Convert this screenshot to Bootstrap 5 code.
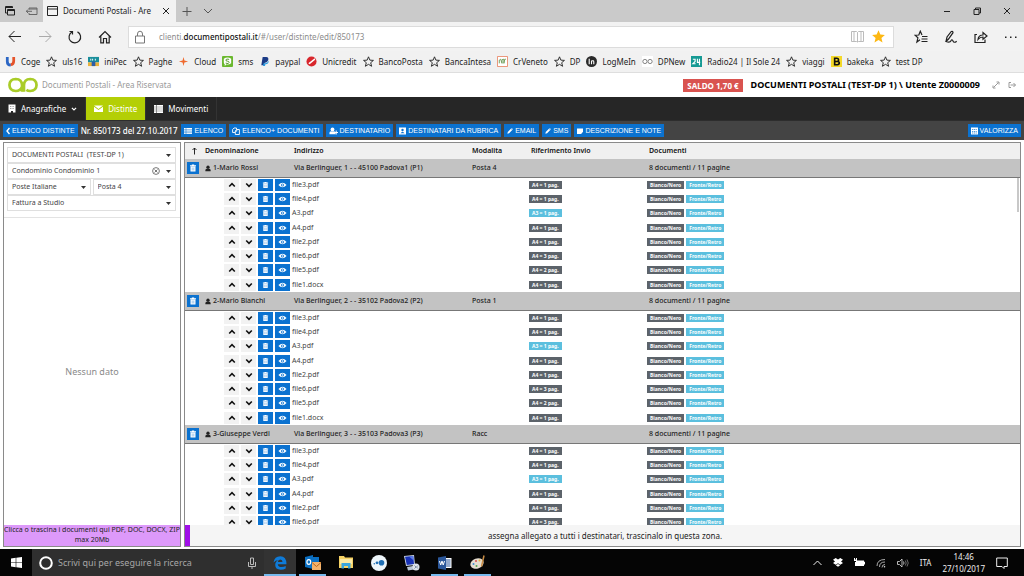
<!DOCTYPE html>
<html lang="it">
<head>
<meta charset="utf-8">
<meta name="viewport" content="width=device-width, initial-scale=1">
<title>Documenti Postali - Area Riservata</title>
<link href="https://cdn.jsdelivr.net/npm/bootstrap@5.3.0/dist/css/bootstrap.min.css" rel="stylesheet">
<style>
  body { font: 8px/12px "Noto Sans", "Open Sans", sans-serif; color: #222; background: #fff; }
  button { font: inherit; color: inherit; border: 0; background: none; padding: 0; }
  svg { display: block; flex: none; }
  .ln { fill: none; stroke: currentColor; }
  a { color: inherit; text-decoration: none; white-space: nowrap; }

  /* browser frame */
  .tabstrip { height: 22px; background: #cacaca; }
  .tab-icons { width: 43px; gap: 10px; }
  .tab-open { background: #f2f2f2; width: 133px; }
  .addressbar { height: 29px; background: #f2f2f2; padding-right: 6px; }
  .navbuttons { width: 128px; }
  .urlbox { height: 22px; background: #fff; border: 1px solid #dcdcdc; color: #8c8c8c; gap: 12px; }
  .urlbox b { color: #111; font-weight: 500; }
  .favbar { height: 22px; background: #f1f1f1; border-bottom: 1px solid #dedede; padding-left: 5px; gap: 6px; color: #222; }
  .favbar a { display: flex; align-items: center; gap: 5px; }

  /* application */
  .apphead { height: 24px; padding: 0 8px; color: #999; }
  .saldo { background: #d9534f; color: #fff; height: 13px; padding: 0 4px; line-height: 13px; }
  .account { font-size: 9px; }
  .mainnav { height: 23px; background: #262626; color: #fff; }
  .mainnav a { display: flex; align-items: center; gap: 5px; padding: 0 8px; border-right: 1px solid #333; }
  .mainnav a.current { background: #b4cf06; }
  .actions { height: 20px; background: #444; padding: 0 3px; gap: 3px; border-top: 1px solid #2d2d2d; }
  .act { background: #0b72d0; color: #fff; height: 13px; padding: 0 3px; font: 7px/13px "Liberation Sans", sans-serif; gap: 2px; display: flex; align-items: center; white-space: nowrap; }
  .distinta { color: #fff; font-weight: 500; padding-right: 1px; }

  .workarea { padding: 2px 3px; gap: 3px; }
  .side { width: 178px; border: 1px solid #8a8a8a; }
  .filters { padding: 4px 4px 6px 3px; border-bottom: 1px solid #e3e3e3; }
  .pick { appearance: none; width: 100%; height: 16px; border: 1px solid #dfdfdf; border-radius: 0; padding: 0 4px; color: #444; font-size: 7px; line-height: 14px;
    background: #fff url("data:image/svg+xml,%3Csvg xmlns='http://www.w3.org/2000/svg' width='5' height='3'%3E%3Cpath d='M0 0h5L2.500 3z' fill='%23333'/%3E%3C/svg%3E") no-repeat right 4px center; }
  .clearpick { position: absolute; right: 16px; top: 4px; color: #555; }
  .dropzone { background: #dd99fa; font-size: 7px; line-height: 10px; height: 21px; color: #222; }
  .empty-note { color: #8a8a8a; font-size: 9px; }

  .list { border: 1px solid #8a8a8a; }
  .rows { flex: 1 1 0; }
  .scrollmark { position: absolute; right: 1px; top: 35px; width: 2px; height: 34px; background: #c8c8c8; }
  .doclist { table-layout: fixed; width: 100%; border-collapse: separate; border-spacing: 0; font-size: 7px; line-height: 12px; color: #444; }
  .doclist td, .doclist th { padding: 0; white-space: nowrap; }
  .doclist th, .doclist .grp td { padding: 0 2px; font-weight: 600; }
  .doclist thead th { height: 16px; background: #f0f0f0; color: #111; }
  .doclist .grp td { height: 19px; background: #c3c3c3; border-bottom: 1px solid #777; color: #222; font-weight: 500; }
  .filerow td { height: 14px; }
  .filerow:nth-child(4n+1) td { height: 15px; }
  .filebuttons { gap: 2px; padding-right: 2px; }
  .tight { gap: 2px; }
  .mini { width: 15px; height: 12px; display: flex; align-items: center; justify-content: center; background: #f2f2f2; color: #111; }
  .mini.blue, .del { background: #0b72d0; color: #fff; }
  .del { width: 12px; height: 12px; display: flex; align-items: center; justify-content: center; }
  .pill { display: block; background: #5c636a; color: #fff; font-size: 5px; font-weight: 700; line-height: 8px; height: 8px; padding: 0 3px; }
  .pill.sky { background: #5bbfde; }
  .assign { height: 21px; background: #f5f5f5; border-left: 5px solid #a010e8; color: #222; }

  /* taskbar */
  .taskbar { height: 27px; background: #050505; color: #eee; }
  .start { width: 32px; }
  .search { width: 232px; background: #2f2f2f; padding: 0 7px; gap: 5px; }
  .search input { background: none; border: 0; outline: 0; color: #a8a8a8; font-size: 9px; padding: 0; min-width: 0; }
  .search input::placeholder { color: #a8a8a8; opacity: 1; }
  .app { width: 33px; height: 27px; display: flex; align-items: center; justify-content: center; }
  .app.running { border-bottom: 2px solid #76b9ed; padding-top: 2px; width: 27px; margin: 0 3px; }
  .app.front { background: #333; width: 32px; margin: 0; }
  .tray { gap: 11px; padding-right: 16px; }
</style>
</head>
<body class="vh-100 d-flex flex-column overflow-hidden">

<svg width="0" height="0" class="position-absolute" aria-hidden="true">
  <symbol id="star" viewBox="0 0 12 12"><path class="ln" d="M6 .9l1.500 3.600 3.900.3-3 2.500 1 3.900L6 9.100l-3.400 2.100 1-3.900-3-2.500 3.900-.3z"/></symbol>
  <symbol id="trash" viewBox="0 0 8 8"><path fill="currentColor" d="M1 1.200h1.800V.5h2.400v.7H7v1H1zM1.500 2.600h5V7.500h-5z"/><path stroke="#0b72d0" stroke-width=".4" d="M3.200 3.500v3M4.800 3.500v3"/></symbol>
  <symbol id="eye" viewBox="0 0 10 8"><path fill="currentColor" d="M.5 4Q5-1 9.500 4 5 9 .5 4z"/><circle cx="5" cy="4" r="1.700" fill="#0b72d0"/><circle cx="5" cy="4" r=".9" fill="#fff"/></symbol>
  <symbol id="up" viewBox="0 0 8 8"><path class="ln" stroke-width="1.600" d="M1.200 5.500L4 2.700l2.800 2.800"/></symbol>
  <symbol id="down" viewBox="0 0 8 8"><path class="ln" stroke-width="1.600" d="M1.200 2.500L4 5.300l2.800-2.800"/></symbol>
  <symbol id="person" viewBox="0 0 8 8"><circle cx="4" cy="2.300" r="2.200" fill="currentColor"/><path fill="currentColor" d="M.5 7.800V6Q.5 4.300 2.300 4.200q1.700 1 3.400 0Q7.500 4.300 7.500 6v1.800z"/></symbol>
  <symbol id="pencil" viewBox="0 0 8 8"><path fill="currentColor" d="M.5 7.500l.5-2.300L5.200 1 7 2.800 2.800 7zM5.700.6L6.300 0 8 1.700l-.6.6z"/></symbol>
</svg>

<header>
  <div class="tabstrip d-flex align-items-stretch">
    <div class="tab-icons d-flex align-items-center ps-1">
      <svg width="12" height="12" viewBox="0 0 12 12"><path class="ln" d="M3 8H1.500V1.500H8.500V3M1.500 2.500h7M3.500 4.500h7v5.500h-7zM3.500 5.500h7"/></svg>
      <svg width="12" height="12" viewBox="0 0 12 12"><path class="ln" color="#666" d="M3 4.500V3h8v6.500H3V8M3 4h8M0 6.300h6M2 4.500L.4 6.300 2 8"/></svg>
    </div>
    <div class="tab-open d-flex align-items-center px-1">
      <svg width="12" height="12" viewBox="0 0 12 12" class="me-1"><path class="ln" d="M.5 1.500h10v9H.5zM.5 4h10"/></svg>
      <span class="text-nowrap flex-grow-1">Documenti Postali - Are</span>
      <button aria-label="Chiudi scheda"><svg width="12" height="12" viewBox="0 0 12 12"><path class="ln" d="M3 3l6 6M9 3L3 9"/></svg></button>
    </div>
    <button class="ms-1" aria-label="Nuova scheda"><svg width="14" height="12" viewBox="0 0 14 12"><path class="ln" color="#555" d="M7 2v9M2.500 6.500h9"/></svg></button>
    <button class="ms-2" aria-label="Elenco schede"><svg width="12" height="12" viewBox="0 0 12 12"><path class="ln" color="#555" d="M2 4l4 4 4-4"/></svg></button>
    <div class="ms-auto d-flex align-items-center gap-3 pe-2 me-1">
      <button class="me-1" aria-label="Riduci"><svg width="10" height="10" viewBox="0 0 10 10"><path class="ln" d="M2 5.500h6"/></svg></button>
      <button class="me-1" aria-label="Ripristina"><svg width="10" height="10" viewBox="0 0 10 10"><path class="ln" d="M2 3.500h5v5H2zM3.500 3.500V2H8.500v5H7"/></svg></button>
      <button aria-label="Chiudi"><svg width="10" height="10" viewBox="0 0 10 10"><path class="ln" d="M2 2l6 6M8 2L2 8"/></svg></button>
    </div>
  </div>

  <div class="addressbar d-flex align-items-center">
    <div class="navbuttons d-flex align-items-center ps-2 gap-3">
      <button aria-label="Indietro"><svg width="14" height="14" viewBox="0 0 14 14"><path class="ln" d="M13 6.500H1M6.500 1L1 6.500 6.500 12"/></svg></button>
      <button aria-label="Avanti"><svg width="14" height="14" viewBox="0 0 14 14"><path class="ln" color="#aaa" d="M1 6.500h12M7.500 1L13 6.500 7.500 12"/></svg></button>
      <button aria-label="Aggiorna"><svg width="14" height="14" viewBox="0 0 14 14"><path class="ln" stroke-width="1.200" d="M9.500 1.900A5.800 5.800 0 1 1 4 2M1.500 1.500H4.500V4.500"/></svg></button>
      <button aria-label="Home"><svg width="14" height="14" viewBox="0 0 14 14"><path class="ln" stroke-width="1.200" d="M1 7.500L7 1.500l6 6M2.800 6v6.800h2.700V8.500h3v4.300h2.700V6"/></svg></button>
    </div>
    <div class="urlbox d-flex align-items-center flex-grow-1 ps-1">
      <svg width="14" height="14" viewBox="0 0 14 14"><path class="ln" color="#777" d="M2.500 6h9v7h-9zM4.500 6V4q0-2.800 2.500-2.800T9.500 4v2"/></svg>
      <a href="#">clienti.<b>documentipostali.it</b>/#/user/distinte/edit/850173</a>
      <div class="ms-auto me-2 d-flex gap-2">
        <button aria-label="Visualizzazione lettura"><svg width="13" height="13" viewBox="0 0 13 13"><path class="ln" color="#bbb" d="M.5 1.500h5l1 1 1-1h5v10h-5l-1 .5-1-.5h-5zM6.500 2.500V12M3 1.500v10M10 1.500v10"/></svg></button>
        <button aria-label="Preferito"><svg width="13" height="13" viewBox="0 0 12 12"><path fill="#fdb813" d="M6 .3l1.700 3.900 4.200.3-3.200 2.800 1 4.200L6 9.300l-3.700 2.200 1-4.200L.1 4.500l4.200-.3z"/></svg></button>
      </div>
    </div>
    <div class="d-flex gap-3 ms-3 ps-1">
      <button aria-label="Hub"><svg width="14" height="14" viewBox="0 0 14 14"><path class="ln" stroke-width="1.200" d="M8 5L6.300 1.200 4.800 5 1 5.200l2.900 2.600-1 4.200L6 9.800M8 6.500h5.500M7.500 9h6M7.500 11.500h6"/></svg></button>
      <button aria-label="Note"><svg width="14" height="14" viewBox="0 0 14 14"><path class="ln" stroke-width="1.200" d="M2 11.500L3 7 7.300 1.500q1.700-.6 1.700 1.200L4.500 9 2 11.500q4 1.500 5-.7t2 .2 3.700.2"/></svg></button>
      <button aria-label="Condividi"><svg width="14" height="14" viewBox="0 0 14 14"><path class="ln" stroke-width="1.200" d="M3 4.500H1v8h10v-3M4 9.500Q4.500 5 9 5V2.500L13 6 9 9.300V7Q6 7 4 9.500z"/></svg></button>
      <button aria-label="Altro"><svg width="14" height="14" viewBox="0 0 14 14"><path fill="#222" d="M1 6.500h1.500V8H1zM6 6.500h1.500V8H6zM11 6.500h1.500V8H11z"/></svg></button>
    </div>
  </div>

  <nav class="favbar d-flex align-items-center" id="favs" aria-label="Preferiti"></nav>
</header>

<div class="apphead d-flex align-items-center">
  <svg width="30" height="18" viewBox="0 0 31 18" class="me-1"><g fill="none" stroke="#a9cc28" stroke-width="2.800"><path d="M14.500 16V9q-.2-6-6.500-6.200-6.300.2-6.500 6.200.2 6 6.500 6.200 5 0 6.500-4.500"/><path d="M16.500 16V9q.2-6 6.500-6.200 6.300.2 6.500 6.200-.2 6-6.500 6.200-2.500 0-4-1.200"/></g></svg>
  <span>Documenti Postali - Area Riservata</span>
  <b class="saldo ms-auto">SALDO 1,70 €</b>
  <b class="account text-black ms-2">DOCUMENTI POSTALI (TEST-DP 1) \ Utente Z0000009</b>
  <button class="ms-2 ps-1" aria-label="Schermo intero"><svg width="8" height="8" viewBox="0 0 8 8"><path class="ln" color="#999" d="M1.500 6.500l5-5M4.500 1h2.500v2.500M1 4.500V7h2.500"/></svg></button>
  <button class="ms-2" aria-label="Esci"><svg width="8" height="8" viewBox="0 0 8 8"><path class="ln" color="#999" d="M3 1.500H1v5h2M2.500 4h5M5.500 2l2 2-2 2"/></svg></button>
</div>

<nav class="mainnav d-flex">
  <a href="#"><svg width="8" height="9" viewBox="0 0 8 9"><path fill="#fff" d="M.5.5h7v8H5V7H3v1.500H.5z"/><path stroke="#888" stroke-width=".8" d="M2 2.500h4M2 4.500h4" stroke-dasharray="1 .6"/></svg>Anagrafiche<svg width="6" height="6" viewBox="0 0 8 8"><use href="#down"/></svg></a>
  <a href="#" class="current"><svg width="9" height="9" viewBox="0 0 9 9"><path fill="#fff" d="M0 1.500h9L4.500 5zM0 2.800L4.500 6 9 2.800V8H0z"/></svg>Distinte</a>
  <a href="#"><svg width="9" height="8" viewBox="0 0 9 8"><path fill="#fff" d="M0 0h2v8H0zM2.500 0H9v8H2.500z"/><path stroke="#777" stroke-width=".5" d="M0 2h9M0 4h9M0 6h9"/></svg>Movimenti</a>
</nav>

<div class="actions d-flex align-items-center">
  <button class="act"><svg width="4" height="8" viewBox="0 0 4 8"><path class="ln" stroke-width="1.400" d="M3.500 1L1 4l2.500 3"/></svg>ELENCO DISTINTE</button>
  <span class="distinta text-nowrap">Nr. 850173 del 27.10.2017</span>
  <button class="act"><svg width="8" height="8" viewBox="0 0 8 8"><path fill="#fff" d="M0 1h8v6H0z"/><path stroke="#0b72d0" stroke-width=".5" d="M0 2.700h8M0 4.200h8M0 5.700h8M2 1v6"/></svg>ELENCO</button>
  <button class="act"><svg width="8" height="8" viewBox="0 0 8 8"><path class="ln" stroke-width=".9" d="M3 5.500H.6V2.500L2 1h2.500v1.500M3.300 4l1.400-1.500h2.700v5H3.300zM3.300 4.200h1.500V2.500"/></svg>ELENCO+ DOCUMENTI</button>
  <button class="act"><svg width="9" height="8" viewBox="0 0 9 8"><use href="#person" width="7" height="8"/><path class="ln" d="M7.200 3.500v4M5.500 5.500H9"/></svg>DESTINATARIO</button>
  <button class="act"><svg width="7" height="8" viewBox="0 0 7 8"><path fill="#fff" d="M0 .5h7v7H0z"/><circle cx="3.500" cy="3" r="1.200" fill="#0b72d0"/><path fill="#0b72d0" d="M1.500 6.300Q3.500 3 5.500 6.300z"/></svg>DESTINATARI DA RUBRICA</button>
  <button class="act"><svg width="6" height="6"><use href="#pencil"/></svg>EMAIL</button>
  <button class="act"><svg width="6" height="6"><use href="#pencil"/></svg>SMS</button>
  <button class="act"><svg width="6" height="6" viewBox="0 0 7 7"><path fill="#fff" d="M0 .5h7v4L4.800 7H0z"/></svg>DESCRIZIONE E NOTE</button>
  <button class="act ms-auto"><svg width="7" height="8" viewBox="0 0 7 8"><path fill="#fff" d="M0 .5h7v7H0z"/><path stroke="#0b72d0" stroke-width=".7" d="M1 2.500h5M1 4.500h5M1 6h5" stroke-dasharray="1.200 .6"/></svg>VALORIZZA</button>
</div>

<main class="workarea d-flex flex-grow-1">
  <aside class="side d-flex flex-column flex-shrink-0">
    <form class="filters">
      <select class="pick d-block" aria-label="Azienda"><option>DOCUMENTI POSTALI&nbsp; (TEST-DP 1)</option></select>
      <div class="position-relative">
        <select class="pick d-block" aria-label="Condominio"><option>Condominio Condominio 1</option></select>
        <button type="button" class="clearpick" aria-label="Cancella"><svg width="8" height="8" viewBox="0 0 8 8"><circle cx="4" cy="4" r="3.400" class="ln" stroke-width=".8"/><path class="ln" stroke-width=".8" d="M2.500 2.500l3 3M5.500 2.500l-3 3"/></svg></button>
      </div>
      <div class="d-flex tight">
        <select class="pick" aria-label="Vettore"><option>Poste Italiane</option></select>
        <select class="pick" aria-label="Modalita"><option>Posta 4</option></select>
      </div>
      <select class="pick d-block" aria-label="Fatturazione"><option>Fattura a Studio</option></select>
    </form>
    <div class="empty-note flex-grow-1 d-flex align-items-center justify-content-center">Nessun dato</div>
    <div class="dropzone text-center">Clicca o trascina i documenti qui PDF, DOC, DOCX, ZIP max 20Mb</div>
  </aside>

  <section class="list d-flex flex-column flex-grow-1 position-relative">
    <div class="rows overflow-hidden">
      <table class="doclist" id="doclist">
        <colgroup><col style="width:18px"><col style="width:89px"><col style="width:178px"><col style="width:59px"><col style="width:118px"><col></colgroup>
        <thead><tr>
          <th><svg width="7" height="8" viewBox="0 0 7 8" class="mx-auto"><path class="ln" stroke-width=".9" d="M3.500 7.500V1M1.500 3l2-2 2 2"/></svg></th>
          <th>Denominazione</th><th>Indirizzo</th><th>Modalita</th><th>Riferimento Invio</th><th>Documenti</th>
        </tr></thead>
      </table>
    </div>
    <div class="scrollmark"></div>
    <div class="assign d-flex align-items-center justify-content-center">assegna allegato a tutti i destinatari, trascinalo in questa zona.</div>
  </section>
</main>

<footer class="taskbar d-flex align-items-stretch flex-shrink-0">
  <button class="start d-flex align-items-center justify-content-center" aria-label="Start"><svg width="11" height="11" viewBox="0 0 11 11"><path fill="#fff" d="M0 1.500l4.700-.7v4.400H0zM5.300.7L11 0v5.200H5.300zM0 5.800h4.700v4.400L0 9.500zM5.300 5.800H11V11l-5.700-.7z"/></svg></button>
  <label class="search d-flex align-items-center">
    <svg width="14" height="14" viewBox="0 0 14 14"><circle cx="7" cy="7" r="5.800" fill="none" stroke="#fff" stroke-width="2"/></svg>
    <input type="text" class="flex-grow-1" aria-label="Cerca" placeholder="Scrivi qui per eseguire la ricerca">
    <svg width="10" height="12" viewBox="0 0 10 12"><path class="ln" color="#bbb" d="M3.500 1h3v6.500h-3zM1.500 5v4.500h7V5M5 9.500V12"/></svg>
  </label>
  <button class="app running front" aria-label="Edge"><svg width="14" height="14" viewBox="0 0 14 14"><path fill="#0f7bd8" d="M.5 6.500Q1.500.3 7.300.3q6.200.2 6.200 7.900H4.800q.2 2.800 3.700 2.800 2.500 0 4.200-1.100v2.700q-2.200 1.200-5 1.200-5.500-.2-5.500-5Q2.300 5.500 5.500 4 2.500 4 .5 6.500zM4.800 6h4.700q0-2.600-2.200-2.600T4.800 6z"/></svg></button>
  <button class="app running" aria-label="Outlook"><svg width="16" height="16" viewBox="0 0 16 16"><path fill="#0a6fc2" d="M0 2l8-2v14l-8-2zM8 2h6v5H8z"/><ellipse cx="3.800" cy="7" rx="1.900" ry="2.400" fill="none" stroke="#fff" stroke-width="1.200"/><path fill="#f4b26a" d="M7 7h9v8H7z"/><path fill="none" stroke="#b9691f" d="M7 7.500l4.500 4 4.500-4"/></svg></button>
  <button class="app" aria-label="Esplora file"><svg width="14" height="13" viewBox="0 0 14 13"><path fill="#f6d264" d="M0 0h5l1 1.500h8V12H0z"/><path fill="#fbe9a4" d="M1 3h12v5H1z"/><path fill="#3aa6dd" d="M2.500 7h9v5.500h-2.500V10H5v2.500H2.500z"/></svg></button>
  <button class="app" aria-label="Assistenza"><svg width="16" height="16" viewBox="0 0 16 16"><circle cx="8" cy="8" r="8" fill="#eef6fb"/><circle cx="10.500" cy="7.800" r="2.800" fill="#1f6fb5"/><circle cx="6" cy="7.800" r="1.400" fill="#1f6fb5"/><circle cx="3.300" cy="8.800" r=".8" fill="#1f6fb5"/></svg></button>
  <button class="app" aria-label="Desktop remoto"><svg width="16" height="16" viewBox="0 0 16 16"><path fill="#cbd6e6" d="M0 1l10-1 1 10-9 1z"/><path fill="#1731b5" d="M1 1.800l8.200-.9.8 8.100-7.200 1z"/><path fill="#5b7be6" d="M5 1.400l4.200-.5.5 4.600z"/><path fill="#b9c6d6" d="M3 12l6-1 1 3.500-6 1z"/><circle cx="12" cy="12" r="3.500" fill="#dfe3ea"/><path class="ln" color="#7c8ea3" d="M10.500 10.500l1.500 1.500-1.500 1.500M13.800 10.500L12.500 12l1.300 1.500"/></svg></button>
  <button class="app running" aria-label="Word"><svg width="14" height="14" viewBox="0 0 14 14"><path fill="#fff" d="M7 2h6.500v10H7z"/><path stroke="#2b579a" d="M8 4h4.500M8 6h4.500M8 8h4.500M8 10h4.500"/><path fill="#2b579a" d="M0 1.500L8 0v14l-8-1.500z"/><path fill="none" stroke="#fff" d="M1.500 5l1.200 4L4 5l1.200 4 1.300-4"/></svg></button>
  <button class="app running" aria-label="Paint"><svg width="16" height="15" viewBox="0 0 16 15"><ellipse cx="7" cy="8.500" rx="6.800" ry="5" fill="#e6ddd0" transform="rotate(-20 7 8.500)"/><circle cx="3.500" cy="9" r="1" fill="#3f8fd0"/><circle cx="6" cy="6" r="1" fill="#d95050"/><circle cx="9.500" cy="5.500" r="1" fill="#e6b83c"/><circle cx="6.500" cy="11" r="1" fill="#57a850"/><path stroke="#c98d45" stroke-width="1.500" d="M14 .5l-2.500 11"/></svg></button>
  <div class="tray ms-auto d-flex align-items-center">
    <svg width="9" height="8" viewBox="0 0 9 8"><path class="ln" d="M.5 6l4-4 4 4"/></svg>
    <svg width="10" height="9" viewBox="0 0 10 9"><path fill="#fff" d="M2.700 0L5 1.600 7.300 0 10 1.800 8 3.500l2 1.600-2.700 1.700L5 5.200 2.700 6.800 0 5.100l2-1.600L0 1.800zM2.800 7.300L5 5.900l2.200 1.400L5 8.700z"/></svg>
    <svg width="11" height="9" viewBox="0 0 11 9"><path fill="#fff" d="M2 2.500h8v1.200h1V6.500h-1V8H1V4h1zM0 0h1v1.500h1V0h1v3H0z"/></svg>
    <svg width="10" height="10" viewBox="0 0 10 10"><path class="ln" color="#bbb" stroke-width=".9" d="M1 8Q1 1.500 9 1.500M3.500 9Q3.500 4 9 4M6 9.500Q6 6.500 9 6.500"/><circle cx="8.500" cy="8.800" r=".8" fill="#ddd"/></svg>
    <svg width="12" height="10" viewBox="0 0 12 10"><path class="ln" color="#ccc" stroke-width=".9" d="M.5 3.500h2L5 1v8L2.500 6.500h-2zM6.500 3.500q1 1.500 0 3"/><path class="ln" color="#777" stroke-width=".9" d="M8.300 2.500q1.800 2.500 0 5M10 1.500q2.500 3.500 0 7"/></svg>
    <span>ITA</span>
    <time class="text-center">14:46<br>27/10/2017</time>
    <svg width="12" height="12" viewBox="0 0 12 12"><path class="ln" d="M.7 1h10.600v8.500H8v2L6 9.500H.7z"/></svg>
  </div>
</footer>

<script src="https://cdn.jsdelivr.net/npm/bootstrap@5.3.0/dist/js/bootstrap.bundle.min.js"></script>
<script>
  const star = '<use href="#star"/>';
  const favs = [
    ['Coge', '<path fill="none" stroke="#e5542b" stroke-width="3" d="M6 9.500q3.500 0 3.500-4V1"/><path fill="none" stroke="#2c66c4" stroke-width="3" d="M2.500 1v5q0 4 3.700 4"/>'],
    ['uls16', star],
    ['iniPec', '<path fill="#1a8f9c" d="M0 1h12v6H0z"/><path fill="#e9b23a" d="M0 7h12v4H0z"/><path fill="#2d5fa8" d="M4 6h4v5H4z"/><path stroke="#fff" d="M3 3v2M5 3v2M8 3v2"/>'],
    ['Paghe', star],
    ['Cloud', '<path fill="#ef6a2e" d="M6 1l1 4 4 1-4 1-1 4-1-4-4-1 4-1z"/>'],
    ['sms', '<rect width="12" height="12" rx="1" fill="#6ab82e"/><path fill="#fff" d="M2 3q4-3 8 0v5q-3 2-5 1l-2 2V9Q2 8 2 7z"/><path fill="none" stroke="#4b931b" d="M7.800 3.700Q4.300 2.600 4.300 4.300T6 5.700t1.700 1.500-3.700.6"/>'],
    ['paypal', '<path fill="#1b3b86" d="M4 1h4q3 .5 2 3.500T6 7.500L5.300 10H2.500z"/><path fill="#2a9ade" d="M5 8h2q3-.5 3.500-3 .5 4-3.500 4L6.500 11H4.300z"/>'],
    ['Unicredit', '<circle cx="6" cy="6" r="5.500" fill="#d8262c"/><path fill="#fff" d="M2.500 8L9.500 2.500 10 4 4 9z"/>'],
    ['BancoPosta', star], ['BancaIntesa', star],
    ['CrVeneto', '<path fill="#fff" stroke="#e8896a" d="M.5.5h11v11H.5z"/><path fill="none" stroke="#6a9a55" d="M2.500 8V4.500l1.500-1L5.500 8V4l2-.5V8l1-4.500h1.200"/>'],
    ['DP', star],
    ['LogMeIn', '<circle cx="6" cy="6" r="6" fill="#2a2a2a"/><path fill="none" stroke="#fff" stroke-width="1.200" d="M3.500 3v6M6 9V5.500q2.500-1 2.500 1V9"/>'],
    ['DPNew', '<path fill="#fff" d="M0 0h12v12H0z"/><g fill="none" stroke="#777"><circle cx="3.200" cy="6" r="2.300"/><circle cx="8.800" cy="6" r="2.300"/></g>'],
    ['Radio24 | Il Sole 24', '<path fill="#169a94" d="M0 0h12v12H0z"/><path fill="none" stroke="#fff" stroke-width="1.200" d="M2 3.500h2.500V6L2 8.500h3M7 3v4h3M9.200 3v7"/>'],
    ['viaggi', star],
    ['bakeka', '<path fill="#f4d929" d="M0 0h12v12H0z"/><path fill="none" stroke="#111" stroke-width="1.800" d="M4 2.500v7h3q2 0 2-1.800T7 6H4h2.500q1.800 0 1.800-1.700T6.500 2.500z"/>'],
    ['test DP', star]
  ];
  document.getElementById('favs').innerHTML = favs.map(([name, art]) =>
    `<a href="#"><svg width="11" height="11" viewBox="0 0 12 12">${art}</svg>${name}</a>`).join('');

  const files = [['file3.pdf', 'A4', 1], ['file4.pdf', 'A4', 1], ['A3.pdf', 'A3', 1], ['A4.pdf', 'A4', 1],
    ['file2.pdf', 'A4', 1], ['file6.pdf', 'A4', 3], ['file5.pdf', 'A4', 2], ['file1.docx', 'A4', 1]];
  const recipients = [
    ['1-Mario Rossi', 'Via Berlinguer, 1 - - 45100 Padova1 (P1)', 'Posta 4', 8],
    ['2-Mario Bianchi', 'Via Berlinguer, 2 - - 35102 Padova2 (P2)', 'Posta 1', 8],
    ['3-Giuseppe Verdi', 'Via Berlinguer, 3 - - 35103 Padova3 (P3)', 'Racc', 6]
  ];
  const icon = (id, w = 8, h = 8) => `<svg width="${w}" height="${h}"><use href="#${id}"/></svg>`;
  const fileRow = ([name, size, pages]) => `<tr class="filerow">
    <td colspan="2"><div class="filebuttons d-flex justify-content-end">
      <button class="mini" aria-label="Su">${icon('up')}</button><button class="mini" aria-label="Giu">${icon('down')}</button>
      <button class="mini blue" aria-label="Elimina">${icon('trash', 7)}</button><button class="mini blue" aria-label="Vedi">${icon('eye', 9)}</button></div></td>
    <td colspan="2">${name}</td>
    <td><div class="d-flex"><span class="pill${size === 'A3' ? ' sky' : ''}">${size} = ${pages} pag.</span></div></td>
    <td><div class="d-flex tight"><span class="pill">Bianco/Nero</span><span class="pill sky">Fronte/Retro</span></div></td></tr>`;
  document.getElementById('doclist').insertAdjacentHTML('beforeend', recipients.map(([who, addr, mode, loaded]) => `<tbody>
    <tr class="grp"><td><button class="del" aria-label="Elimina">${icon('trash')}</button></td>
    <td><div class="d-flex align-items-center tight"><svg width="6" height="7"><use href="#person"/></svg>${who}</div></td>
    <td>${addr}</td><td>${mode}</td><td></td><td>8 documenti / 11 pagine</td></tr>${files.slice(0, loaded).map(fileRow).join('')}</tbody>`).join(''));
</script>
</body>
</html>
